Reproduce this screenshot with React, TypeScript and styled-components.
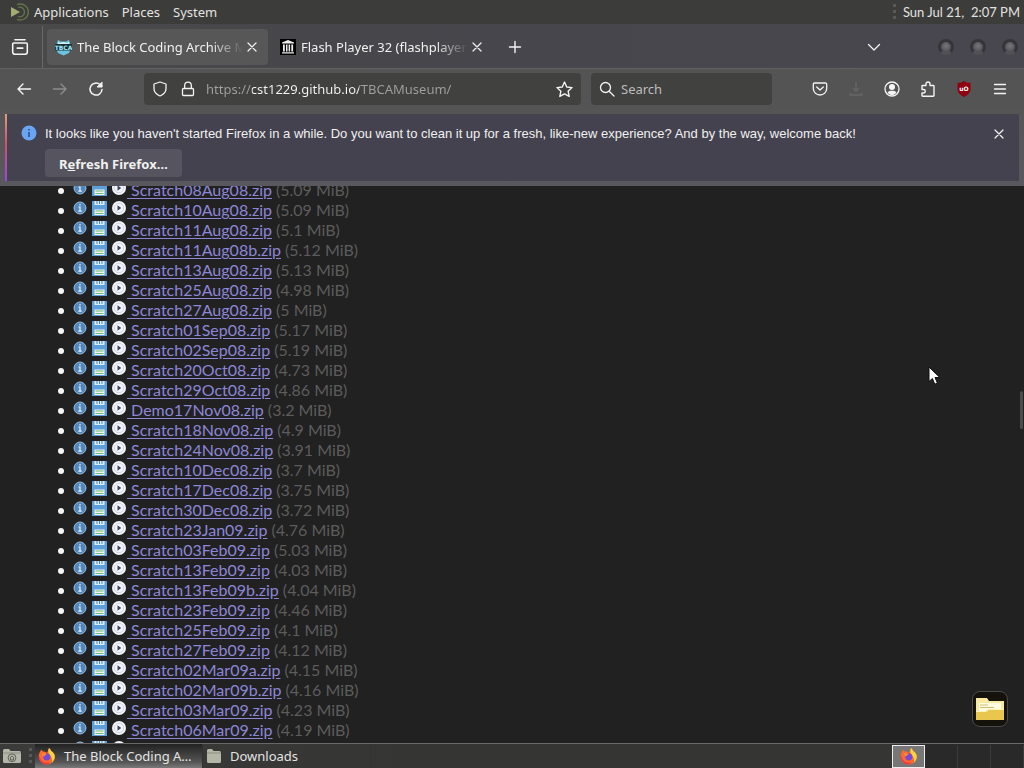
import React from "react";
import styled, { createGlobalStyle, css } from "styled-components";

const GlobalStyle = createGlobalStyle`
  * { box-sizing: border-box; }
  html, body { margin: 0; height: 100%; background: #212121; }
  #root { height: 100%; }
  body, button, input { font-family: "Noto Sans", "Open Sans", sans-serif; font-size: 13px; }
  button { border: 0; padding: 0; background: none; color: inherit; }
  svg { display: block; flex: none; }
`;

const Desktop = styled.div`
  position: relative;
  display: flex;
  flex-direction: column;
  height: 100vh;
  overflow: hidden;
  color: #f0f0f0;
`;

const Panel = styled.header`
  display: flex;
  align-items: center;
  justify-content: space-between;
  flex: none;
  height: 24px;
  padding: 0 4px 0 9px;
  background: #3c3c3a;
  color: #e2e2e0;
`;

const PanelMenus = styled.nav`
  display: flex;
  align-items: center;
  gap: 13px;
`;

const PanelButton = styled.button`
  display: flex;
  align-items: center;
  gap: 5px;
  line-height: 24px;
`;

const Clock = styled.time`
  display: flex;
  align-items: center;
  gap: 7px;
  font-family: Lato, sans-serif;
  white-space: pre;
`;

const Grip = styled.span`
  width: 3px;
  height: 16px;
  background: repeating-linear-gradient(#585856 0 3px, transparent 3px 6px);
`;

const TabStrip = styled.div`
  display: flex;
  align-items: center;
  flex: none;
  height: 44px;
  padding-top: 2px;
  background: linear-gradient(90deg, #4a4a4a, #47464b 30%, #48474f);
`;

const FirefoxView = styled.button`
  display: flex;
  align-items: center;
  justify-content: center;
  width: 43px;
  height: 42px;
  padding-right: 3px;
  border-right: 1px solid #69696b;
`;

const Tab = styled.div<{ $active?: boolean }>`
  display: flex;
  align-items: center;
  flex: 0 1 221px;
  min-width: 0;
  height: 36px;
  margin-left: 4px;
  padding: 0 7px 0 8px;
  border-radius: 4px;
  background: ${(p) => (p.$active ? "#575757" : "transparent")};
`;

const TabTitle = styled.span`
  flex: 1;
  min-width: 0;
  margin-left: 5px;
  overflow: hidden;
  white-space: nowrap;
  line-height: 20px;
  mask-image: linear-gradient(90deg, #000 calc(100% - 32px), transparent);
`;

const IconButton = styled.button<{ $size: number; $dim?: boolean }>`
  display: flex;
  align-items: center;
  justify-content: center;
  flex: none;
  width: ${(p) => p.$size}px;
  height: ${(p) => p.$size}px;
  opacity: ${(p) => (p.$dim ? 0.35 : 1)};
`;

const NewTab = styled(IconButton)`
  margin-left: 4px;
`;

const StripEnd = styled.div`
  display: flex;
  align-items: center;
  margin-left: auto;
  padding-right: 6px;
`;

const WindowButtons = styled.div`
  display: flex;
  gap: 16px;
  margin-left: 48px;
`;

const WindowButton = styled.button`
  width: 16px;
  height: 16px;
  border: 3px solid #36353a;
  border-bottom-color: #515157;
  border-radius: 50%;
  background: radial-gradient(circle at 50% 40%, #77777c, #504f55 75%);
`;

const NavBar = styled.div`
  display: flex;
  align-items: center;
  flex: none;
  height: 42px;
  padding: 0 8px 1px;
  border-top: 1px solid #626262;
  background: #545454;
`;

const Field = styled.label<{ $basis: number }>`
  display: flex;
  align-items: center;
  flex: ${(p) => p.$basis} 1 ${(p) => p.$basis}px;
  min-width: 0;
  height: 32px;
  padding: 0 8px;
  border-radius: 4px;
  background: #414140;
`;

const Fields = styled.div`
  display: flex;
  flex: 1;
  min-width: 0;
  gap: 10px;
  margin: 0 32px;
`;

const FieldIcons = styled.span`
  display: flex;
  flex: none;
  gap: 12px;
`;

const fieldText = css`
  flex: 1;
  min-width: 0;
  height: 28px;
  padding: 0;
  border: 0;
  outline: 0;
`;

const UrlInput = styled.input`
  ${fieldText}
  margin-left: 10px;
  color: transparent;
  background: linear-gradient(90deg, #a0a0a0 46px, #f6f6f6 46px 153px, #a0a0a0 153px);
  background-clip: text;
  -webkit-background-clip: text;
`;

const SearchInput = styled.input`
  ${fieldText}
  margin-left: 6px;
  background: transparent;
  color: #f6f6f6;
  &::placeholder { color: #bcbcbc; opacity: 1; }
`;

const NavActions = styled.div`
  display: flex;
  gap: 4px;
`;

const NoticeArea = styled.div`
  flex: none;
  padding: 4px 5px 5px;
  background: linear-gradient(#555555, #59585f);
`;

const Notice = styled.section`
  display: grid;
  grid-template-columns: 17px 1fr auto;
  column-gap: 7px;
  padding: 8px 8px 4px 14px;
  border-left: 2px solid;
  border-image: linear-gradient(#e0a07a, #d0506e 45%, #9a48e0) 1;
  min-height: 67px;
  background: #44424e;
`;

const NoticeBody = styled.div`
  display: flex;
  flex-direction: column;
  align-items: flex-start;
  gap: 3px;
`;

const NoticeText = styled.p`
  margin: 0;
  font-family: "Liberation Sans", sans-serif;
  line-height: 24px;
`;

const RefreshButton = styled.button`
  height: 28px;
  padding: 1px 14px 0;
  border-radius: 4px;
  background: #56545f;
  font-weight: 700;
`;

const InfoSpot = styled.span`
  padding-top: 3px;
`;

const Page = styled.main`
  position: relative;
  flex: 1;
  min-height: 0;
  overflow: hidden;
  background: #212121;
`;

const FileList = styled.ul`
  margin: -6px 0 0;
  padding: 0 0 0 58px;
  font-family: Lato, sans-serif;
  font-size: 16px;
  list-style: none;
`;

const FileRow = styled.li`
  display: flex;
  align-items: center;
  height: 20px;
  line-height: 20px;
  white-space: nowrap;

  &::before {
    content: "";
    width: 6px;
    height: 6px;
    margin: 2px 8px 0 0;
    border-radius: 50%;
    background: #f4f4f4;
  }
`;

const RowIcons = styled.span`
  display: flex;
  align-items: center;
  gap: 5px;
  padding: 0 1px 4px 1px;
`;

const FileLink = styled.a`
  color: #8b86d6;
  text-decoration: underline;
  text-underline-offset: 2px;
`;

const IconLink = styled.a`
  display: block;
`;

const FileSize = styled.span`
  margin-left: 4px;
  color: #5c5c5c;
`;

const ScrollThumb = styled.div`
  position: absolute;
  top: 205px;
  right: 1px;
  width: 3px;
  height: 38px;
  border-radius: 2px;
  background: #4c4c4c;
`;

const FolderDock = styled.button`
  position: absolute;
  right: 16px;
  bottom: 41px;
  display: flex;
  align-items: center;
  justify-content: center;
  width: 36px;
  height: 36px;
  border: 1px solid #4a4a4a;
  border-radius: 8px;
  background: #15120c;
`;

const Pointer = styled.div`
  position: absolute;
  left: 928px;
  top: 366px;
`;

const Taskbar = styled.footer`
  display: flex;
  align-items: center;
  flex: none;
  height: 25px;
  padding-left: 2px;
  border-top: 1px solid #686868;
  background: linear-gradient(90deg, #3b3b3a, #353534 40%, #353534 87%, #292929 91%);
`;

const TaskGrip = styled(Grip)`
  margin: 0 3px 0 7px;
`;

const Task = styled.button<{ $active?: boolean }>`
  display: flex;
  align-items: center;
  gap: 8px;
  width: 168px;
  height: 24px;
  padding: 0 4px 0 3px;
  color: #e4e4e2;
  text-align: left;
  border-right: 1px solid #333332;
  background: ${(p) =>
    p.$active ? "linear-gradient(#222222, #555555 75%, #7a7a7a)" : "transparent"};
`;

const TaskLabel = styled.span`
  white-space: nowrap;
`;

const Workspaces = styled.div`
  display: flex;
  margin-left: auto;
`;

const Workspace = styled.button<{ $active?: boolean }>`
  display: flex;
  align-items: center;
  justify-content: center;
  width: 33px;
  height: 23px;
  border: ${(p) => (p.$active ? "1px solid #eeeeee" : "0")};
  border-right: 1px solid ${(p) => (p.$active ? "#eeeeee" : "#3b3b3b")};
  background: ${(p) => (p.$active ? "#777777" : "transparent")};
`;

type LineProps = { d: string; size?: number; width?: number; children?: React.ReactNode };

const Line = ({ d, size = 16, width = 1.3, children }: LineProps) => (
  <svg width={size} height={size} viewBox="0 0 16 16" fill="none" stroke="#f4f4f4" strokeWidth={width} strokeLinecap="round" strokeLinejoin="round" aria-hidden="true">
    <path d={d} />
    {children}
  </svg>
);

const CloseIcon = () => <Line d="M4 4l8 8M12 4l-8 8" width={1.2} />;

const LockIcon = () => (
  <Line d="M3.500 7.500h9a1 1 0 0 1 1 1v5a1 1 0 0 1-1 1h-9a1 1 0 0 1-1-1v-5a1 1 0 0 1 1-1zM4.700 7.500V4.500a3.300 3.300 0 0 1 6.600 0v3" />
);

const DownloadIcon = () => (
  <svg width="16" height="16" viewBox="0 0 16 16" fill="none" stroke="#8a8a8a" strokeWidth="1.300" aria-hidden="true">
    <path d="M8 1v9M5 7l3 3 3-3M2 12v2h12v-2" />
  </svg>
);

const MateLogo = () => (
  <svg width="20" height="20" viewBox="0 0 20 20" fill="none" aria-hidden="true">
    <path d="M2 5l9 5-9 5z" fill="#a2ab72" />
    <path d="M8 2.700a8 8 0 1 1 0 14.600" stroke="#65754a" strokeWidth="1.400" />
    <path d="M9 5.500a4.800 4.800 0 1 1 0 9" stroke="#65754a" strokeWidth="1.300" />
  </svg>
);

const ArchiveFavicon = () => (
  <svg width="17" height="17" viewBox="0 0 17 17" aria-hidden="true">
    <path d="M2 4L3 1l3 1.500h5L14 1l1 3 1.500 4.500L14 14l-5.500 2.500L3 14 .5 8.500z" fill="#6cc4dc" />
    <path d="M3 3l2 1 3-1 4 1 2-1v3H3z" fill="#d8f2f8" />
    <rect x="0" y="5" width="17" height="6.500" rx="1" fill="#16303a" />
    <text x="8.500" y="10.500" textAnchor="middle" fontFamily="DejaVu Sans" fontSize="6" fontWeight="700" fill="#a8eaf8">TBCA</text>
  </svg>
);

const MuseumFavicon = () => (
  <svg width="16" height="16" viewBox="0 0 16 16" aria-hidden="true">
    <path d="M0 0h16v16H0z" fill="#000" />
    <path d="M8 1l6 2.500v1H2v-1zM3 5.500h1.800v7H3zM6 5.500h1.500v7H6zM8.600 5.500h1.500v7H8.600zM11.300 5.500h1.800v7h-1.800zM2 13.200h12v1.300H2z" fill="#eee" />
  </svg>
);

const FirefoxLogo = () => (
  <svg width="18" height="18" viewBox="0 0 18 18" aria-hidden="true">
    <path d="M2 5c.5-1.500 1-2 1.500-2.500.2 1 .8 1.500 1.500 2 2 0 3 .5 4 1.500L11 1c1 .8 1.800 1.800 2 3 1.200.2 3 2 3.700 4.500C17.500 13.500 13.500 17.500 9 17.500S.8 14 .8 9.500C.8 7.500 1.300 6 2 5z" fill="#ff6a2b" />
    <path d="M11 1c1 .8 1.800 1.800 2 3 1.200.2 3 2 3.700 4.500.4 3-1 5.500-2.700 7 .6-3.500-.5-5.500-2-7C10.500 7 9.600 4 11 1z" fill="#ffd23a" />
    <path d="M1 8c1.500 7 6 8.500 11 7.500-1 1.300-2.500 2-3.500 2C4 17.300 1 14 .8 9.500z" fill="#f8344e" />
    <circle cx="8.800" cy="9.800" r="3.600" fill="#7549d8" />
    <path d="M4 6.500c2-.8 4 0 4.800.8-1.200.8-2.300.8-2.600 2.200-1 .2-2-1.500-2.200-3z" fill="#ff8b31" />
  </svg>
);

const HomeFolderIcon = () => (
  <svg width="20" height="16" viewBox="0 0 20 16" aria-hidden="true">
    <path d="M1 2.500Q1 1 2.500 1H7l1.500 2h9Q19 3 19 4.500v9q0 1.500-1.500 1.500h-15Q1 15 1 13.500z" fill="#b4b6a8" />
    <path d="M1 5h18" stroke="#8c8e82" />
    <circle cx="10" cy="9.800" r="3.900" fill="none" stroke="#60635a" />
    <path d="M7.800 10L10 8l2.200 2M8.600 10v2h2.800v-2" fill="none" stroke="#60635a" />
  </svg>
);

const FolderIcon = () => (
  <svg width="16" height="16" viewBox="0 0 16 16" aria-hidden="true">
    <path d="M1 2.500Q1 1 2.500 1H6l1.500 2h6Q15 3 15 4.500v9q0 1.500-1.500 1.500h-11Q1 15 1 13.500z" fill="#b4b6a8" />
    <path d="M1 5h14" stroke="#8c8e82" />
  </svg>
);

const NoticeInfoIcon = () => (
  <svg width="16" height="16" viewBox="0 0 16 16" aria-hidden="true">
    <circle cx="8" cy="8" r="7.500" fill="#69a5f4" />
    <path d="M8 7v5M8 4v1.500" stroke="#34507e" strokeWidth="1.600" />
  </svg>
);

const InfoIcon = () => (
  <svg width="14" height="14" viewBox="0 0 14 14" aria-hidden="true">
    <circle cx="7" cy="7" r="6" fill="#5287bb" stroke="#9cc0e0" />
    <path d="M5.500 6H7v4M5.300 10.200h3.400M7 3v1.500" stroke="#e8f1fa" strokeWidth="1.200" fill="none" />
  </svg>
);

const DiskIcon = () => (
  <svg width="15" height="16" viewBox="0 0 15 16" aria-hidden="true">
    <path d="M0 1h15v15H0z" fill="#5c9fda" />
    <path d="M2.500 1h10v4h-10z" fill="#dcecf8" />
    <path d="M5 1v3M7.500 1v3M10 1v3" stroke="#4b88bd" />
    <path d="M2.500 9.500h10v5.500h-10z" fill="#eef6ee" />
    <path d="M3.500 11h8M3.500 13.500h8" stroke="#74b778" />
  </svg>
);

const PlayIcon = () => (
  <svg width="14" height="14" viewBox="0 0 14 14" aria-hidden="true">
    <circle cx="7" cy="7" r="7" fill="#f3f5fb" />
    <circle cx="7" cy="7" r="4.800" fill="none" stroke="#ccd2e2" />
    <path d="M5.500 4.200L9.200 7l-3.700 2.800z" fill="#3d4560" />
  </svg>
);

const files: [string, string][] = [
  ["Scratch08Aug08.zip", "5.09"],
  ["Scratch10Aug08.zip", "5.09"],
  ["Scratch11Aug08.zip", "5.1"],
  ["Scratch11Aug08b.zip", "5.12"],
  ["Scratch13Aug08.zip", "5.13"],
  ["Scratch25Aug08.zip", "4.98"],
  ["Scratch27Aug08.zip", "5"],
  ["Scratch01Sep08.zip", "5.17"],
  ["Scratch02Sep08.zip", "5.19"],
  ["Scratch20Oct08.zip", "4.73"],
  ["Scratch29Oct08.zip", "4.86"],
  ["Demo17Nov08.zip", "3.2"],
  ["Scratch18Nov08.zip", "4.9"],
  ["Scratch24Nov08.zip", "3.91"],
  ["Scratch10Dec08.zip", "3.7"],
  ["Scratch17Dec08.zip", "3.75"],
  ["Scratch30Dec08.zip", "3.72"],
  ["Scratch23Jan09.zip", "4.76"],
  ["Scratch03Feb09.zip", "5.03"],
  ["Scratch13Feb09.zip", "4.03"],
  ["Scratch13Feb09b.zip", "4.04"],
  ["Scratch23Feb09.zip", "4.46"],
  ["Scratch25Feb09.zip", "4.1"],
  ["Scratch27Feb09.zip", "4.12"],
  ["Scratch02Mar09a.zip", "4.15"],
  ["Scratch02Mar09b.zip", "4.16"],
  ["Scratch03Mar09.zip", "4.23"],
  ["Scratch06Mar09.zip", "4.19"],
];

const FileIcons = () => (
  <RowIcons>
    <IconLink href="#info" aria-label="Info"><InfoIcon /></IconLink>
    <IconLink href="#save" aria-label="Save"><DiskIcon /></IconLink>
    <IconLink href="#play" aria-label="Play"><PlayIcon /></IconLink>
  </RowIcons>
);

export default function App() {
  return (
    <Desktop>
      <GlobalStyle />
      <Panel>
        <PanelMenus>
          <PanelButton><MateLogo />Applications</PanelButton>
          <PanelButton>Places</PanelButton>
          <PanelButton>System</PanelButton>
        </PanelMenus>
        <Clock><Grip />{"Sun Jul 21,  2:07 PM"}</Clock>
      </Panel>

      <TabStrip>
        <FirefoxView aria-label="Firefox View">
          <Line size={18} width={1.4} d="M3.500 1.500h9M2.500 4.500h11a1 1 0 0 1 1 1v7a2 2 0 0 1-2 2h-9a2 2 0 0 1-2-2v-7a1 1 0 0 1 1-1zM5.500 9h5" />
        </FirefoxView>
        <Tab $active>
          <ArchiveFavicon />
          <TabTitle>The Block Coding Archive Museum</TabTitle>
          <IconButton $size={18} aria-label="Close tab"><CloseIcon /></IconButton>
        </Tab>
        <Tab>
          <MuseumFavicon />
          <TabTitle>Flash Player 32 (flashplayer_32)</TabTitle>
          <IconButton $size={18} aria-label="Close tab"><CloseIcon /></IconButton>
        </Tab>
        <NewTab $size={36} aria-label="New tab"><Line d="M8 2.500v11M2.500 8h11" width={1.4} /></NewTab>
        <StripEnd>
          <IconButton $size={32} aria-label="List all tabs"><Line d="M2.500 5.500L8 11l5.500-5.500" /></IconButton>
          <WindowButtons>
            <WindowButton aria-label="Minimize" />
            <WindowButton aria-label="Maximize" />
            <WindowButton aria-label="Close" />
          </WindowButtons>
        </StripEnd>
      </TabStrip>

      <NavBar>
        <NavActions>
          <IconButton $size={32} aria-label="Back"><Line d="M14.500 8H2M7 3L2 8l5 5" width={1.4} /></IconButton>
          <IconButton $size={32} $dim aria-label="Forward"><Line d="M1.500 8H14M9 3l5 5-5 5" width={1.4} /></IconButton>
          <IconButton $size={32} aria-label="Reload">
            <Line d="M14 8.500A6 6 0 1 1 12 3.600L13.800 5.400" width={1.5}>
              <path d="M14 1.500v4.500H9.500z" fill="#f4f4f4" strokeWidth="1" />
            </Line>
          </IconButton>
        </NavActions>
        <Fields>
          <Field $basis={437}>
            <FieldIcons>
              <Line d="M8 1l6 2v4.500c0 3.500-2.500 6-6 7.500-3.500-1.500-6-4-6-7.500V3z" />
              <LockIcon />
            </FieldIcons>
            <UrlInput aria-label="Address" defaultValue="https://cst1229.github.io/TBCAMuseum/" />
            <Line size={17} d="M8 1l2.100 4.600 5 .6-3.700 3.400 1 4.900L8 12.100l-4.400 2.400 1-4.900L.9 6.200l5-.6z" />
          </Field>
          <Field $basis={181}>
            <Line d="M11.500 6.500a5 5 0 1 1-10 0 5 5 0 0 1 10 0zM10.200 10.200l4.800 4.800" />
            <SearchInput aria-label="Search" placeholder="Search" />
          </Field>
        </Fields>
        <NavActions>
          <IconButton $size={32} aria-label="Save to Pocket">
            <Line d="M2.500 2h11a1.200 1.200 0 0 1 1.200 1.200V7.500a6.700 6.500 0 0 1-13.400 0V3.200A1.200 1.200 0 0 1 2.500 2zM4.700 6L8 9l3.300-3" />
          </IconButton>
          <IconButton $size={32} $dim aria-label="Downloads"><DownloadIcon /></IconButton>
          <IconButton $size={32} aria-label="Account">
            <Line d="M15 8A7 7 0 1 1 1 8a7 7 0 0 1 14 0z">
              <circle cx="8" cy="6" r="2.400" fill="#f4f4f4" />
              <path d="M3.500 11.500C5 10 6 9.800 8 9.800s3 .2 4.500 1.700C11 13.500 9.500 14 8 14s-3-.5-4.500-2.500z" fill="#f4f4f4" stroke="none" />
            </Line>
          </IconButton>
          <IconButton $size={32} aria-label="Extensions">
            <Line width={1.4} d="M2 5.200a.7.7 0 0 1 .7-.7H6V3a2 2 0 0 1 4 0v1.500h3.300a.7.7 0 0 1 .7.7v9.300a.7.7 0 0 1-.7.700H2.700a.7.7 0 0 1-.7-.7V12h1.500a1.600 1.600 0 0 0 0-3.500H2z" />
          </IconButton>
          <IconButton $size={32} aria-label="uBlock Origin">
            <svg width="16" height="16" viewBox="0 0 16 16" aria-hidden="true">
              <path d="M8 0l2.500 1.500L14.500 2v6c0 4-3 6-6.500 8-3.500-2-6.500-4-6.500-8V2l4-.5z" fill="#900010" />
              <text x="8" y="10" textAnchor="middle" fontFamily="DejaVu Sans" fontSize="6" fontWeight="700" fill="#fff">uO</text>
            </svg>
          </IconButton>
          <IconButton $size={32} aria-label="Menu"><Line d="M2.500 3.500h11M2.500 8h11M2.500 12.500h11" /></IconButton>
        </NavActions>
      </NavBar>

      <NoticeArea>
        <Notice>
          <InfoSpot><NoticeInfoIcon /></InfoSpot>
          <NoticeBody>
            <NoticeText>It looks like you haven't started Firefox in a while. Do you want to clean it up for a fresh, like-new experience? And by the way, welcome back!</NoticeText>
            <RefreshButton>R<u>e</u>fresh Firefox…</RefreshButton>
          </NoticeBody>
          <IconButton $size={24} aria-label="Dismiss"><CloseIcon /></IconButton>
        </Notice>
      </NoticeArea>

      <Page>
        <FileList>
          {files.map(([name, size]) => (
            <FileRow key={name}>
              <FileIcons />
              <FileLink href="#file">{"\u00a0" + name}</FileLink>
              <FileSize>({size} MiB)</FileSize>
            </FileRow>
          ))}
          <FileRow><FileIcons /></FileRow>
        </FileList>
        <ScrollThumb />
      </Page>

      <Taskbar>
        <IconButton $size={20} aria-label="Show files"><HomeFolderIcon /></IconButton>
        <TaskGrip />
        <Task $active><FirefoxLogo /><TaskLabel>The Block Coding A…</TaskLabel></Task>
        <Task><FolderIcon /><TaskLabel>Downloads</TaskLabel></Task>
        <Workspaces>
          <Workspace $active aria-label="Workspace 1"><FirefoxLogo /></Workspace>
          <Workspace aria-label="Workspace 2" />
          <Workspace aria-label="Workspace 3" />
          <Workspace aria-label="Workspace 4" />
        </Workspaces>
      </Taskbar>

      <FolderDock aria-label="Files">
        <svg width="28" height="24" viewBox="0 0 28 24" aria-hidden="true">
          <path d="M0 1h11l2 3h15v19H0z" fill="#f7e9a0" />
          <path d="M3 6h22v11H3z" fill="#fffbe0" />
          <path d="M4 8h8M4 10.500h14" stroke="#d3be77" />
          <path d="M0 14h10l3-2h15v11H0z" fill="#e9c64d" />
          <path d="M0 14.500h10l3-2h15" stroke="#fff3b4" fill="none" />
        </svg>
      </FolderDock>
      <Pointer>
        <svg width="14" height="20" viewBox="0 0 14 20" aria-hidden="true">
          <path d="M1 1v14.500l3.400-3 2.400 5.700 2.600-1.100L7 11.500h4.800z" fill="#fff" stroke="#111" />
        </svg>
      </Pointer>
    </Desktop>
  );
}
